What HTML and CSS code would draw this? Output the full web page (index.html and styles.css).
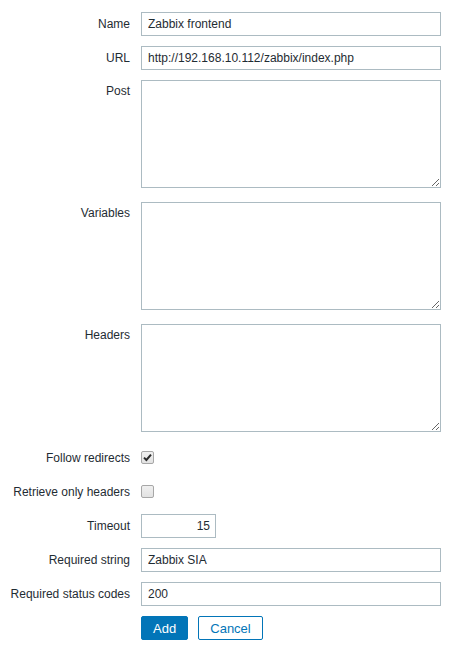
FILE: index.html
```html
<!DOCTYPE html>
<html lang="en">
<head>
    <meta charset="UTF-8">
    <meta name="viewport" content="width=device-width, initial-scale=1.0">
    <title>Web scenario step</title>
    <link rel="stylesheet" href="styles.css">
</head>
<body>
    <form class="form-grid" id="stepForm">
        <label class="label" for="name">Name</label>
        <div class="field"><input type="text" id="name" class="input" value="Zabbix frontend"></div>

        <label class="label" for="url">URL</label>
        <div class="field"><input type="text" id="url" class="input" value="http://192.168.10.112/zabbix/index.php"></div>

        <label class="label label-top" for="post">Post</label>
        <div class="field field-area"><textarea id="post" class="textarea"></textarea></div>

        <label class="label label-top" for="variables">Variables</label>
        <div class="field field-area"><textarea id="variables" class="textarea"></textarea></div>

        <label class="label label-top" for="headers">Headers</label>
        <div class="field field-area"><textarea id="headers" class="textarea"></textarea></div>

        <label class="label" for="follow">Follow redirects</label>
        <div class="field">
            <span class="checkbox" id="follow">
                <svg width="9" height="9" viewBox="0 0 9 9"><path d="M1 4.6 L3.4 7 L8 1.6" fill="none" stroke="#2b2b2b" stroke-width="2"/></svg>
            </span>
        </div>

        <label class="label" for="retrieve">Retrieve only headers</label>
        <div class="field"><span class="checkbox" id="retrieve"></span></div>

        <label class="label" for="timeout">Timeout</label>
        <div class="field"><input type="text" id="timeout" class="input input-short" value="15"></div>

        <label class="label" for="required">Required string</label>
        <div class="field"><input type="text" id="required" class="input" value="Zabbix SIA"></div>

        <label class="label" for="codes">Required status codes</label>
        <div class="field"><input type="text" id="codes" class="input" value="200"></div>

        <div></div>
        <div class="field buttons">
            <button type="button" class="btn btn-primary">Add</button>
            <button type="button" class="btn btn-alt">Cancel</button>
        </div>
    </form>
</body>
</html>
```

FILE: styles.css
```css
body {
    margin: 0;
    padding: 0;
    background-color: #ffffff;
    color: #1f2c33;
    font-family: "Liberation Sans", Arial, sans-serif;
    font-size: 12px;
}

.form-grid {
    display: grid;
    grid-template-columns: 131px 300px;
    column-gap: 10px;
    padding-top: 12px;
}

.label {
    text-align: right;
    line-height: 24px;
    height: 24px;
    padding-right: 1px;
    white-space: nowrap;
}

.label-top {
    line-height: 14px;
    padding-top: 4px;
}

.field {
    display: flex;
    align-items: center;
    min-height: 24px;
    margin-bottom: 10px;
}

.field-area {
    margin-bottom: 14px;
}

.input {
    box-sizing: border-box;
    width: 300px;
    height: 24px;
    margin: 0;
    padding: 0 5px 0 6px;
    border: 1px solid #acbbc2;
    border-radius: 0;
    background: #ffffff;
    color: #1f2c33;
    font-family: "Liberation Sans", Arial, sans-serif;
    font-size: 12px;
    outline: none;
}

.input-short {
    width: 75px;
    text-align: right;
    padding-right: 5px;
}

.textarea {
    display: block;
    box-sizing: border-box;
    width: 300px;
    height: 108px;
    margin: 0;
    padding: 4px 5px;
    border: 1px solid #acbbc2;
    border-radius: 0;
    font-family: "Liberation Sans", Arial, sans-serif;
    font-size: 12px;
    color: #1f2c33;
    resize: both;
    outline: none;
}

.checkbox {
    box-sizing: border-box;
    display: flex;
    align-items: center;
    justify-content: center;
    width: 13px;
    height: 13px;
    margin-top: -1px;
    border: 1px solid #a7a7a7;
    border-radius: 2px;
    background: linear-gradient(#f0f0f0, #e2e2e2);
}

.buttons {
    gap: 10px;
}

.btn {
    box-sizing: border-box;
    height: 24px;
    margin: 0;
    padding: 0 11px;
    border: 1px solid #0275b8;
    border-radius: 2px;
    font-family: "Liberation Sans", Arial, sans-serif;
    font-size: 13px;
    cursor: pointer;
}

.btn-primary {
    width: 47px;
    background-color: #0275b8;
    color: #ffffff;
}

.btn-alt {
    width: 65px;
    background-color: #ffffff;
    color: #0275b8;
}
```
